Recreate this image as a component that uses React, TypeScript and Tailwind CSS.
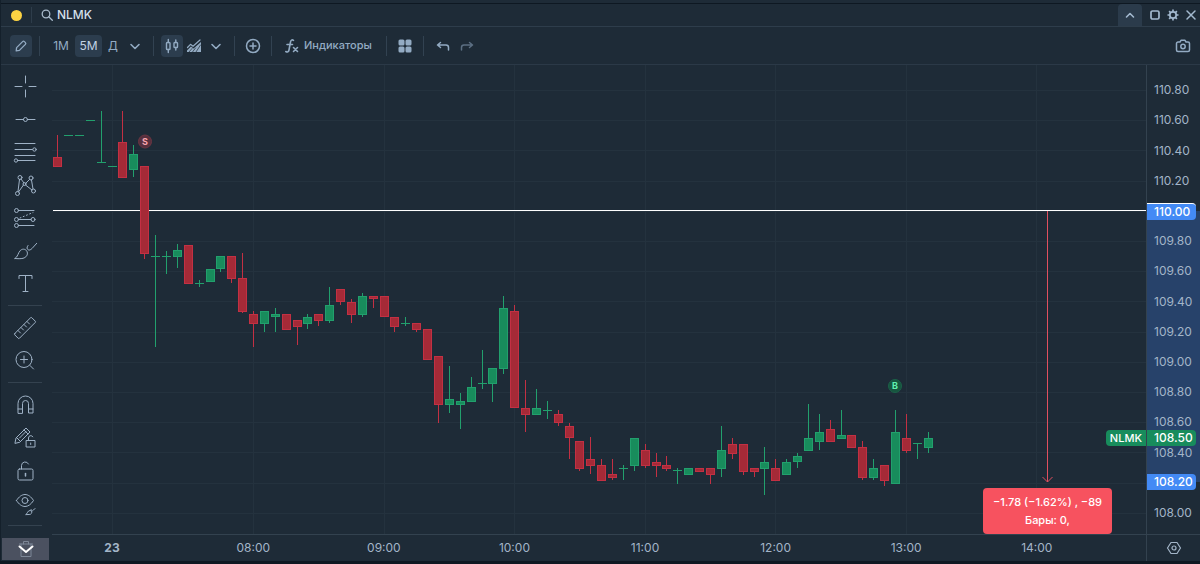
import type { ReactNode } from "react";

type Candle = [dir: "g" | "r", high: number, top: number, bottom: number, low: number];

const candles: Candle[] = [
  ["r", 135, 157, 167, 167], ["g", 135, 135, 135, 135], ["g", 135, 135, 135, 135], ["g", 120, 120, 120, 120],
  ["g", 111, 162, 162, 163], ["g", 166, 166, 166, 166], ["r", 111, 142, 178, 178], ["g", 145, 154, 170, 177],
  ["r", 166, 166, 254, 259], ["g", 235, 256, 256, 347], ["g", 251, 256, 256, 274], ["g", 244, 250, 257, 268],
  ["r", 245, 245, 284, 284], ["g", 280, 283, 283, 287], ["g", 269, 269, 282, 282], ["g", 256, 256, 269, 272],
  ["r", 256, 256, 279, 283], ["r", 253, 278, 312, 313], ["r", 311, 314, 324, 347], ["g", 311, 311, 324, 332],
  ["g", 308, 314, 317, 332], ["r", 314, 314, 330, 330], ["r", 320, 320, 327, 345], ["g", 314, 317, 324, 329],
  ["r", 314, 314, 321, 326], ["g", 287, 305, 321, 323], ["r", 289, 289, 302, 305], ["r", 299, 302, 315, 323],
  ["g", 293, 296, 315, 317], ["r", 296, 296, 299, 308], ["r", 296, 296, 317, 317], ["r", 317, 317, 327, 332],
  ["g", 317, 323, 323, 326], ["r", 323, 323, 330, 332], ["r", 329, 329, 360, 360], ["r", 356, 356, 405, 423],
  ["g", 366, 399, 405, 413], ["g", 393, 401, 405, 429], ["g", 377, 387, 402, 402], ["g", 350, 383, 383, 389],
  ["g", 368, 368, 384, 402], ["g", 296, 308, 369, 374], ["r", 305, 311, 408, 408], ["r", 380, 408, 415, 432],
  ["g", 389, 408, 415, 415], ["g", 401, 410, 410, 419], ["r", 410, 414, 423, 426], ["r", 423, 426, 438, 459],
  ["r", 441, 441, 469, 471], ["r", 437, 459, 466, 474], ["r", 459, 465, 481, 481], ["r", 459, 474, 478, 480],
  ["g", 465, 468, 468, 480], ["g", 438, 438, 466, 471], ["r", 444, 450, 466, 468], ["r", 453, 462, 466, 477],
  ["r", 456, 465, 469, 471], ["g", 468, 470, 470, 484], ["g", 468, 468, 475, 475], ["r", 468, 468, 472, 472],
  ["r", 468, 468, 475, 484], ["g", 426, 450, 469, 477], ["r", 438, 444, 454, 459], ["r", 444, 444, 472, 475],
  ["r", 468, 468, 472, 477], ["g", 447, 462, 469, 495], ["r", 459, 468, 481, 481], ["g", 459, 462, 475, 475],
  ["g", 453, 456, 462, 468], ["g", 404, 438, 451, 451], ["g", 414, 432, 442, 450], ["r", 420, 429, 442, 442],
  ["g", 410, 435, 439, 439], ["r", 435, 435, 448, 448], ["r", 441, 447, 478, 480], ["g", 459, 468, 478, 480],
  ["r", 465, 465, 481, 486], ["g", 410, 432, 484, 484], ["r", 414, 438, 451, 453], ["g", 443, 443, 443, 459],
  ["g", 432, 438, 448, 453],
];

const prices = [
  "110.80", "110.60", "110.40", "110.20", "110.00", "109.80", "109.60", "109.40",
  "109.20", "109.00", "108.80", "108.60", "108.40", "108.20", "108.00",
];
const taggedPrices = ["110.00", "108.20"];
const hours = ["08:00", "09:00", "10:00", "11:00", "12:00", "13:00", "14:00"];
const gridX = [112, 253, 384, 514, 645, 775, 906, 1036];

function Icon({ children, className = "size-6", box = 24, sw = 1 }: { children: ReactNode; className?: string; box?: number; sw?: number }) {
  return (
    <svg viewBox={`0 0 ${box} ${box}`} className={`shrink-0 ${className}`} fill="none" stroke="currentColor" strokeWidth={sw} strokeLinecap="round" strokeLinejoin="round" aria-hidden="true">
      {children}
    </svg>
  );
}

const drawTools: { label: string; icon: ReactNode }[][] = [
  [
    { label: "Перекрестие", icon: <path d="M12.5 2v7M12.5 16v7M2 12.5h7M16 12.5h7" /> },
    { label: "Горизонтальная линия", icon: <><path d="M3 12.5h7.5M14.5 12.5H22" /><circle cx="12.5" cy="12.5" r="2" /></> },
    { label: "Фибоначчи", icon: <><path d="M2 3.500h20M2 9.500h18M2 15.500h20M4.500 20.500H22" /><circle cx="21.500" cy="9.500" r="1.700" fill="#1e2b37" /><circle cx="3" cy="20.500" r="1.700" fill="#1e2b37" /></> },
    { label: "Паттерн XABCD", icon: <><path d="M5 18.500 6.500 6.500M5.500 19l5-7M8 6l3 4M16.500 6.500l-4 4M12.500 12l6.500 5M18.500 7l1.500 9" /><circle cx="7" cy="4.500" r="2" /><circle cx="18" cy="5" r="2" /><circle cx="11.500" cy="11" r="1.500" /><circle cx="4.500" cy="20.500" r="2" /><circle cx="20.500" cy="18" r="2" /></> },
    { label: "Прогноз", icon: <><path d="M5.500 4.500H21M5.500 13.500H18M5.500 19.500H21" /><circle cx="3.500" cy="4.500" r="2" /><circle cx="3.500" cy="13.500" r="2" /><circle cx="3.500" cy="19.500" r="2" /><circle cx="20" cy="13.500" r="2" /><path d="M7 12 20 6.500" strokeDasharray="1 2.500" /></> },
    { label: "Кисть", icon: <path d="M2 19.500c3-1.500 3-6 5.500-8.200 2.800-2.300 6-.7 6.700 1.700.9 3-1.200 5.500-4.200 6.300-2.500.6-5 .4-8 .2ZM15 6.500c-1.500 2-1.200 3.500.1 4.300 1.400.8 2.900-.3 3.900-1.300L24 4" /> },
    { label: "Текст", icon: <path d="M6 6.500V3.500h13v3M12.500 3.500v16M10 19.500h5" /> },
  ],
  [
    { label: "Линейка", icon: <><path d="m1.800 17.500 15.700-15.700a1 1 0 0 1 1.400 0l3.300 3.300a1 1 0 0 1 0 1.400L6.500 22.200a1 1 0 0 1-1.400 0l-3.300-3.300a1 1 0 0 1 0-1.400Z" /><path d="m5 14.500 2.500 2.500M8 11.500l2.500 2.500M11 8.500l2.500 2.500M14 5.500l2.500 2.500" /></> },
    { label: "Увеличить", icon: <><circle cx="11" cy="10.500" r="8" /><path d="m17 16.500 3.500 3.500M11 7v7M7.500 10.500h7" /></> },
  ],
  [
    { label: "Магнит", icon: <><path d="M5 20V10.500a7.500 7.500 0 0 1 15 0V20h-4.500v-9.500a3 3 0 0 0-6 0V20Z" /><path d="M5 16h4.500M15.500 16H20" /></> },
    { label: "Режим рисования", icon: <><path d="m2 17 1-5L13 2l4 4L7 16ZM3.500 11.500l4 4M11 4l4 4M6.500 12l6.500-6.500" /><path fill="#1e2b37" d="M13.500 14.500h8.500V21h-8.500Z" /><path d="M15.500 14.500v-2.500a2.300 2.300 0 0 1 4.300-1.200M17.700 17v1.500" /></> },
    { label: "Блокировка", icon: <><rect x="5" y="10" width="15" height="11" rx="1.500" /><path d="M8.500 10V6.500A3.700 3.700 0 0 1 15.500 5" /><path strokeWidth="1.500" d="M12.500 14.500v2.500" /></> },
    { label: "Скрыть объекты", icon: <><path d="M3.500 8.500C6 4.500 9 2.500 12 2.500s6 2 8.500 6c-2.500 4-5.500 6-8.500 6s-6-2-8.500-6Z" /><circle cx="12" cy="8.500" r="3" /><path d="M13 22.500c1.500-.500 1.500-4 4-4s2.500 4-.5 4ZM18 17.500c-.5 1.500 1.500 2 2.500.5l1.500-1.500" /></> },
  ],
];

function Divider() {
  return <div className="mx-[7px] h-5 w-px shrink-0 bg-[#324251]" />;
}

function ToolButton({ label, children, active = false }: { label: string; children: ReactNode; active?: boolean }) {
  return (
    <button aria-label={label} className={`flex h-[22px] w-[22px] shrink-0 items-center justify-center rounded ${active ? "bg-[#2c3d4e]" : ""}`}>
      {children}
    </button>
  );
}

const Down = () => (
  <Icon className="h-[22px] w-[22px]" box={22} sw={1.6}><path d="m7 9.500 4 4 4-4" /></Icon>
);

function Header() {
  return (
    <header className="flex h-6 items-center border-t border-t-[#0e1822] border-b border-b-[#2e3d4b] pl-[10px]">
      <span className="size-[11px] rounded-full bg-[#fcd343]" />
      <span className="mx-[9px] h-4 w-px bg-[#2e3d4b]" />
      <button className="flex items-center gap-1 text-[#d3dfea]">
        <Icon className="size-3 text-[#a9bacb]" box={12} sw={1.3}><circle cx="5" cy="5" r="3.800" /><path d="m8 8 3.300 3.300" /></Icon>
        <span className="text-[12px] font-medium">NLMK</span>
      </button>
      <div className="ml-auto flex items-center self-stretch text-[#a3b9cf]">
        <button aria-label="Свернуть" className="mr-1 flex w-6 items-center justify-center self-stretch rounded-t bg-[#2b3b4b]">
          <Icon className="size-3" box={12} sw={1.6}><path d="m2.500 8 3.500-3.500L9.500 8" /></Icon>
        </button>
        <button aria-label="Развернуть" className="flex w-[18px] justify-center">
          <Icon className="size-3" box={12} sw={1.7}><rect x="2" y="2" width="8" height="8" rx="1.500" /></Icon>
        </button>
        <button aria-label="Настройки" className="flex w-[18px] justify-center">
          <Icon className="size-3" box={12} sw={1.7}><circle cx="6" cy="6" r="3.200" /><path strokeLinecap="butt" d="M6 .5v2M6 9.500v2M.5 6h2M9.500 6h2M2.100 2.100l1.400 1.400M8.500 8.500l1.400 1.400M9.900 2.100 8.500 3.500M3.500 8.500 2.100 9.900" /></Icon>
        </button>
        <button aria-label="Закрыть" className="flex w-[18px] justify-center">
          <Icon className="size-3" box={12} sw={1.5}><path d="m2 2 8 8M10 2l-8 8" /></Icon>
        </button>
      </div>
    </header>
  );
}

function Toolbar() {
  return (
    <div className="flex h-[38px] items-center border-b border-[#2b3947] pl-[9px] text-[12px] text-[#93abc3]">
      <ToolButton label="Рисование" active>
        <Icon className="size-[14px]" box={14} sw={1.3}><path d="m2.200 11.800.4-3.200 6-6a1.300 1.300 0 0 1 1.800 0l1 1a1.300 1.300 0 0 1 0 1.800l-6 6Z" /></Icon>
      </ToolButton>
      <Divider />
      <button className="w-7">1M</button>
      <button className="h-[22px] w-[27px] rounded bg-[#2c3d4e] text-[#c2d3e3]">5M</button>
      <button className="w-[22px]">Д</button>
      <ToolButton label="Другие интервалы"><Down /></ToolButton>
      <Divider />
      <ToolButton label="Свечи" active>
        <Icon className="size-4" box={16} sw={1.4}><rect x="2.500" y="4.500" width="3.500" height="7" rx=".8" /><path d="M4.300 1.500v3M4.300 11.500v3M11.800 2v2.500M11.800 9.500V12" /><rect x="10" y="4.500" width="3.500" height="5" rx=".8" /></Icon>
      </ToolButton>
      <ToolButton label="Область">
        <Icon className="size-4" box={16} sw={1.2}><path d="m1.500 9.500 3-3.200 2.500 2L14 2" /><path fill="currentColor" stroke="none" d="M1 14v-1.500l4-4 2.500 2L15 4v10Z" /><path stroke="#1e2b37" strokeWidth=".7" d="m3 14 3-3.500M6.500 14l3-4M10 14l4.500-7" /></Icon>
      </ToolButton>
      <ToolButton label="Другие типы графика"><Down /></ToolButton>
      <Divider />
      <ToolButton label="Сравнить">
        <Icon className="size-4" box={16} sw={1.5}><circle cx="8" cy="8" r="6.500" /><path d="M8 5v6M5 8h6" /></Icon>
      </ToolButton>
      <Divider />
      <button className="flex items-center gap-1 pr-[7px] pl-[5px]">
        <Icon className="size-4" box={16} sw={1.6}><path d="M9.500 2.300C8 1.300 6.800 2.200 6.500 4L5 12c-.3 1.800-1.700 2.500-3.200 1.500M3 6.500h5.500" /><path d="m9.500 9.500 4 4M13.500 9.500l-4 4" /></Icon>
        <span className="text-[11px] font-medium">Индикаторы</span>
      </button>
      <Divider />
      <ToolButton label="Шаблоны">
        <Icon className="size-[14px]" box={14}><g fill="currentColor" stroke="none"><rect x=".5" y=".5" width="6" height="6" rx="1.500" /><rect x="7.500" y=".5" width="6" height="6" rx="1.500" /><rect x=".5" y="7.500" width="6" height="6" rx="1.500" /><rect x="7.500" y="7.500" width="6" height="6" rx="1.500" /></g></Icon>
      </ToolButton>
      <Divider />
      <button aria-label="Отменить" className="flex w-6 justify-center">
        <Icon className="size-[14px]" box={14} sw={1.5}><path d="M4.500 3.500 1.500 6l3 2.500M1.500 6H10a2.500 2.500 0 0 1 2.500 2.500V11" /></Icon>
      </button>
      <button aria-label="Повторить" className="flex w-6 justify-center text-[#5c6f83]">
        <Icon className="size-[14px]" box={14} sw={1.5}><path d="m9.500 3.500 3 2.500-3 2.500M12.500 6H4a2.500 2.500 0 0 0-2.500 2.500V11" /></Icon>
      </button>
      <button aria-label="Снимок" className="mr-2 ml-auto flex w-[18px] justify-center">
        <Icon className="size-4" box={16} sw={1.5}><path d="M1.500 5.500a1.500 1.500 0 0 1 1.500-1.500h2L6 2.300h4L11 4h2a1.500 1.500 0 0 1 1.500 1.500V12a1.500 1.500 0 0 1-1.500 1.500H3A1.500 1.500 0 0 1 1.500 12Z" /><circle cx="8" cy="8.500" r="2.200" /></Icon>
      </button>
    </div>
  );
}

function Sidebar() {
  return (
    <aside className="row-span-2 flex flex-col pt-1 pl-[7px] text-[#9fb2c6]">
      {drawTools.map((group, i) => (
        <div key={i}>
          {group.map((tool) => (
            <button key={tool.label} aria-label={tool.label} className="flex h-[33px] w-[34px] items-center justify-center">
              <Icon>{tool.icon}</Icon>
            </button>
          ))}
          <div className="my-[5px] h-px w-[34px] bg-[#34424f]" />
        </div>
      ))}
      <button aria-label="Удалить" className="mt-[7px] -ml-[6px] flex h-[22px] w-[47px] items-center justify-center bg-[#4b5160] text-[#7d8797]">
        <Icon className="size-5" box={20}><path d="M3.500 5h13M5 5v12.500h10V5M7.500 5V2.500h5V5" /><path stroke="#ffffff" strokeWidth="2" d="m3.500 7.500 6.500 5.500 6.500-5.500" /></Icon>
      </button>
    </aside>
  );
}

function Marker({ x, y, letter, fill, ring, color }: { x: number; y: number; letter: string; fill: string; ring: string; color: string }) {
  return (
    <g>
      <circle cx={x} cy={y} r="6.500" fill={fill} stroke={ring} />
      <text x={x} y={y + 3} textAnchor="middle" fontSize="9" fontWeight="700" fill={color}>{letter}</text>
    </g>
  );
}

function Chart() {
  return (
    <div className="relative min-w-0">
      <svg viewBox="52 65 1094 469" className="block h-auto w-full" role="img" aria-label="NLMK, 5 минут">
        <g stroke="#24323e">
          {prices.map((p, i) => {
            const y = Math.floor(90.5 + i * 30.2) + 0.5;
            return <line key={p} x1="52" x2="1146" y1={y} y2={y} />;
          })}
          {gridX.map((x) => <line key={x} x1={x + 0.5} x2={x + 0.5} y1="65" y2="534" />)}
        </g>
        <line x1="53" x2="1146" y1="210.500" y2="210.500" stroke="#ffffff" />
        {candles.map(([dir, high, top, bottom, low], i) => {
          const x = Math.floor(57.7 + i * 10.88);
          const edge = dir === "g" ? "#22a06d" : "#c33043";
          return (
            <g key={i} stroke={edge} fill={dir === "g" ? "#188c5c" : "#a52a37"}>
              {low > high && <line x1={x + 0.5} x2={x + 0.5} y1={high} y2={low} />}
              {bottom > top
                ? <rect x={x - 3.5} y={top + 0.5} width="8" height={bottom - top - 1} />
                : <line x1={x - 4} x2={x + 5} y1={top + 0.5} y2={top + 0.5} />}
            </g>
          );
        })}
        <Marker x={145} y={141.5} letter="S" fill="#57303e" ring="#6b3542" color="#f9a5ae" />
        <Marker x={895} y={386} letter="B" fill="#17553f" ring="#1b6148" color="#5ff0ae" />
        <path d="M1047.500 211v271M1042.500 477l5 5 5-5" fill="none" stroke="#e04f5f" />
      </svg>
      <div className="absolute right-[34px] bottom-0 rounded bg-[#f7525f] px-[10px] py-[5px] text-center text-[11px] leading-[18px] font-medium text-white">
        <div>−1.78 (−1.62%) , −89</div>
        <div>Бары: 0,</div>
      </div>
      <div className="absolute top-[365px] right-0 flex h-4 items-center rounded-l-sm bg-[#188c5c] px-1 text-[11px] font-medium text-white">NLMK</div>
    </div>
  );
}

function PriceAxis() {
  const tag = "absolute left-0 flex w-[49px] items-center rounded-r-sm pl-[7px] font-medium text-white";
  return (
    <div className="relative flex flex-col border-l border-[#33424f] pt-[10px] pb-[6px] text-[12px] text-[#a3b5c8]">
      <div className="absolute top-[146px] right-0 left-0 h-[271px] bg-[#27426a]" />
      {prices.map((p) => (
        <div key={p} className="relative flex flex-1 items-center pl-[7px] leading-4">{taggedPrices.includes(p) ? null : p}</div>
      ))}
      <div className={`${tag} top-[138px] h-[17px] border-t border-white bg-[#438af5]`}>110.00</div>
      <div className={`${tag} top-[365px] h-4 bg-[#188c5c]`}>108.50</div>
      <div className={`${tag} top-[409px] h-4 bg-[#438af5]`}>108.20</div>
    </div>
  );
}

export default function App() {
  return (
    <div className="min-h-screen bg-[#0f1923] font-['Inter','Liberation_Sans',sans-serif]">
      <main className="border-l border-[#14202b] bg-[#1e2b37] pt-[3px]">
        <Header />
        <Toolbar />
        <div className="grid grid-cols-[51px_minmax(0,1fr)_54px]">
          <Sidebar />
          <Chart />
          <PriceAxis />
          <div className="flex h-[27px] items-center border-t border-[#33424f] text-center text-[12px] text-[#a3b5c8]">
            <span className="w-[120px] font-bold">23</span>
            <div className="ml-4 flex flex-1 pr-11">
              {hours.map((h) => <span key={h} className="flex-1">{h}</span>)}
            </div>
          </div>
          <button aria-label="Настройки шкалы" className="flex items-center justify-center border-t border-l border-[#33424f] text-[#a3b5c8]">
            <Icon className="size-4" box={16} sw={1.2}><path d="M5 2.500h6L14.500 8 11 13.500H5L1.500 8Z" /><circle cx="8" cy="8" r="2" /></Icon>
          </button>
        </div>
      </main>
    </div>
  );
}
